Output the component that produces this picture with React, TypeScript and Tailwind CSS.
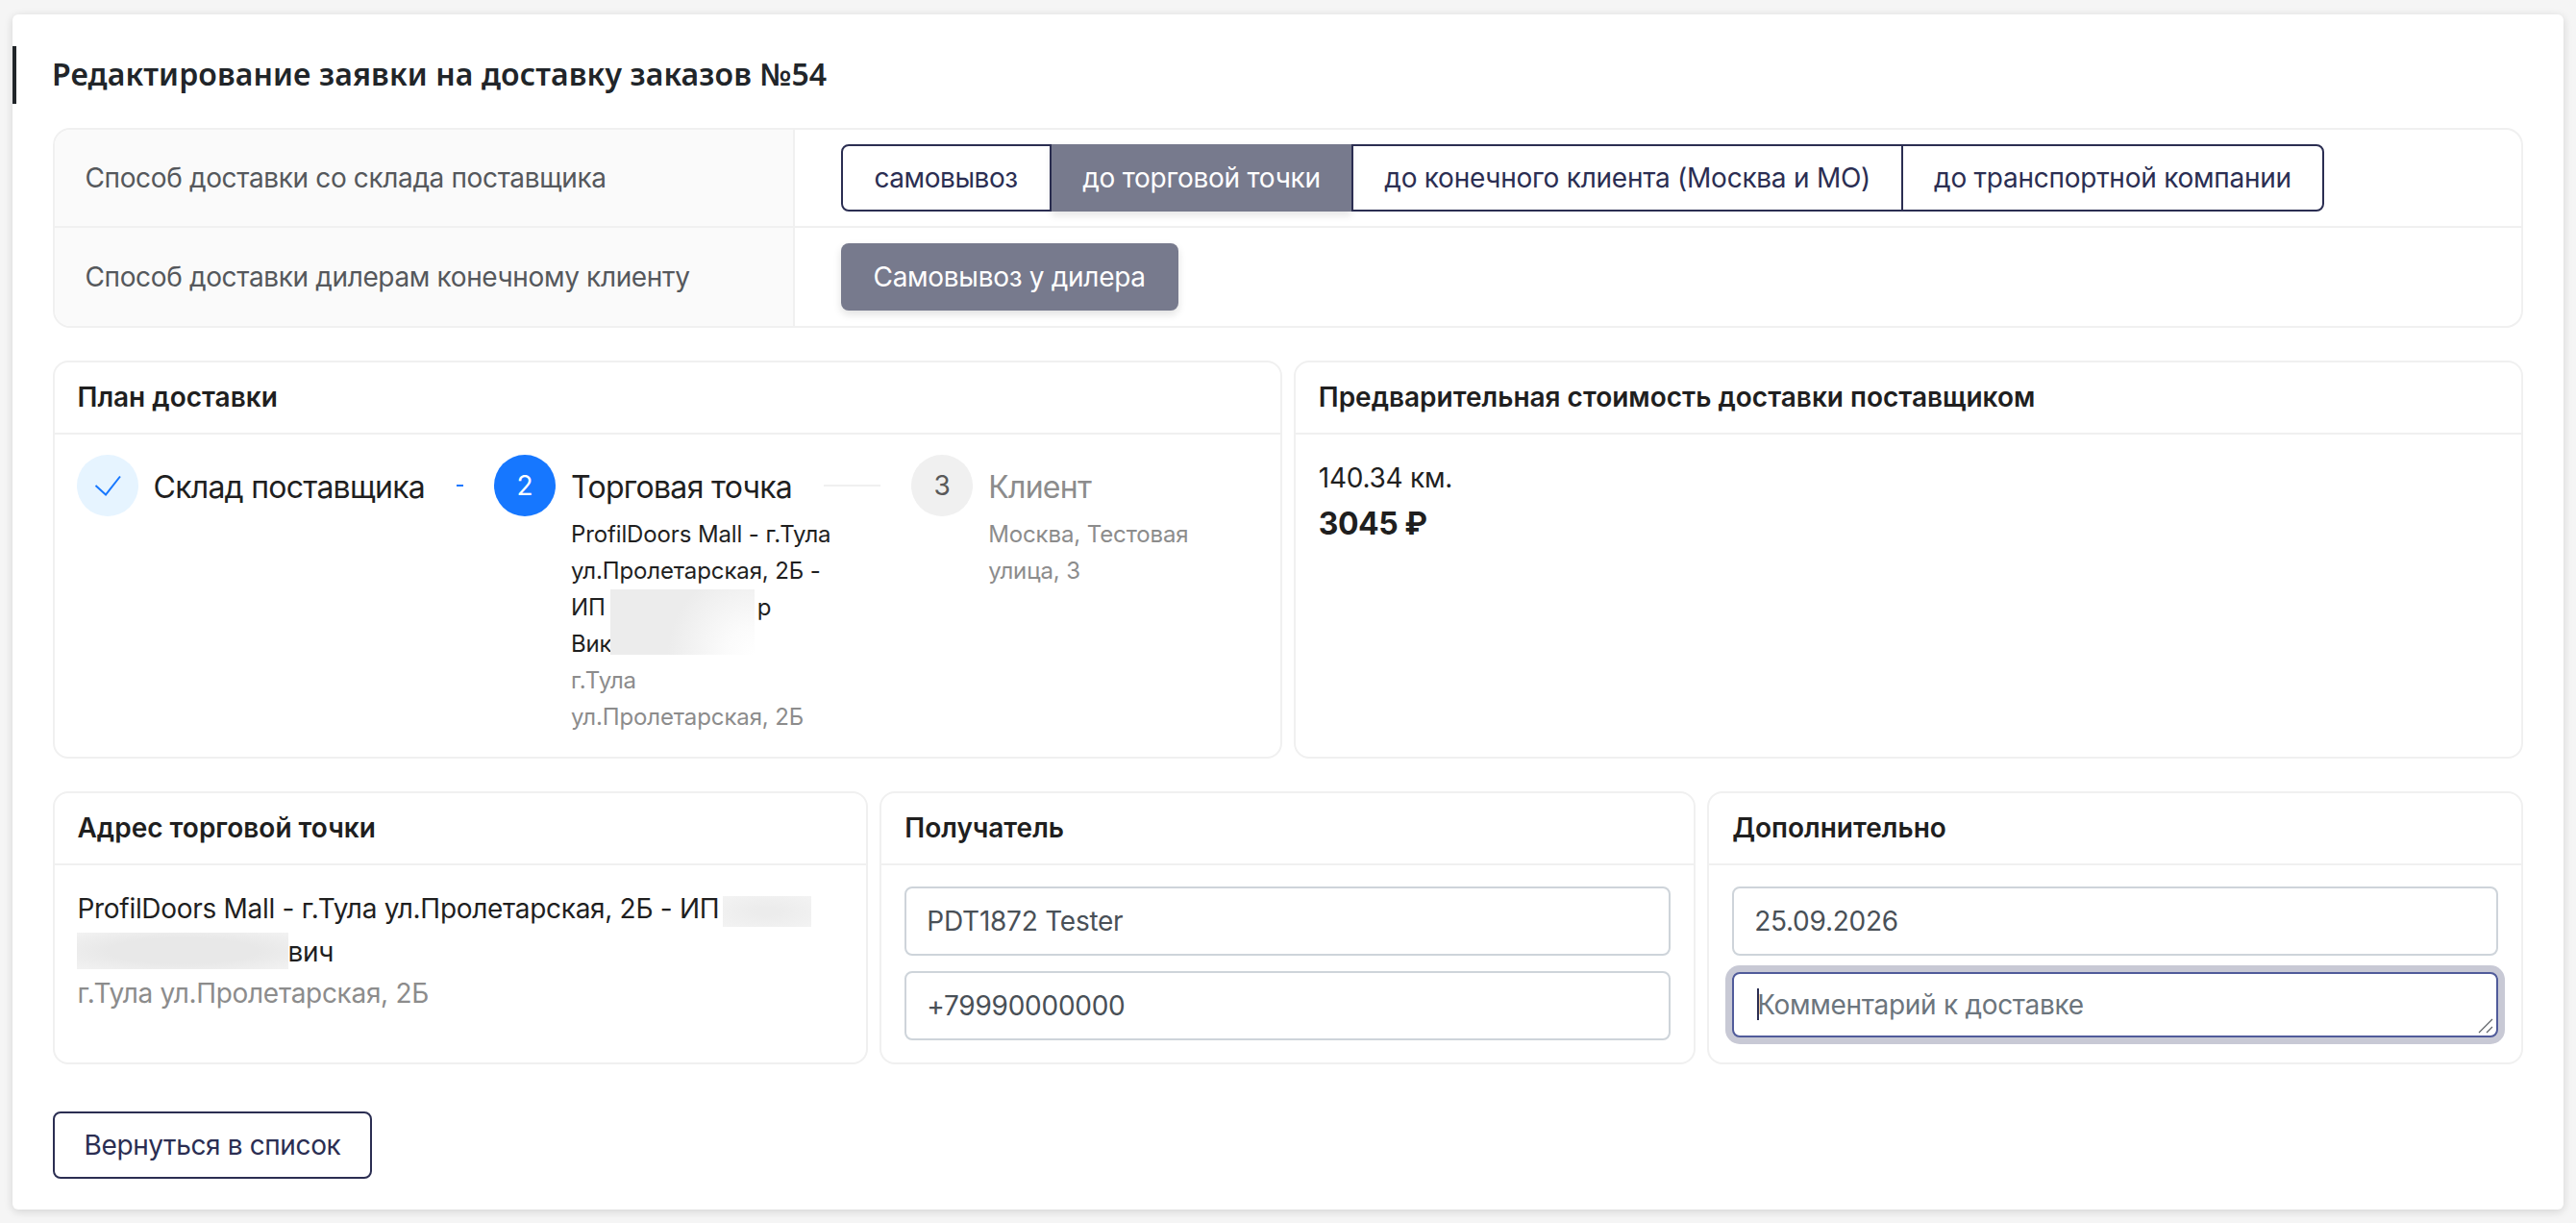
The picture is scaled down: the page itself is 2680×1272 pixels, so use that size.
import { ReactNode } from 'react';

function Panel({ title, children, bodyClass }: { title: string; children: ReactNode; bodyClass?: string }) {
    return (
        <div className="flex flex-col border-2 border-[#f0f0f0] rounded-[16px] bg-white min-w-0">
            <div className="h-[75px] shrink-0 flex items-center px-[24px] pb-[1px] border-b-2 border-[#f0f0f0] text-[28px] font-semibold text-[#1f1f1f]">
                {title}
            </div>
            <div className={bodyClass}>{children}</div>
        </div>
    );
}

function Blur({ className }: { className: string }) {
    return <div className={`absolute ${className}`} />;
}

function Connector({ className }: { className: string }) {
    return <div className={`h-[2px] ml-[33px] ${className}`} />;
}

function TextField({ value }: { value: string }) {
    return (
        <input
            readOnly
            value={value}
            className="w-full h-[72px] px-[21px] border-2 border-[#ced4da] rounded-[8px] bg-white text-[28px] tracking-[-0.25px] text-[#495057] outline-none"
        />
    );
}

export default function App() {
    return (
        <div className="min-h-[1272px] bg-[#f5f5f5] pt-[15px] px-[13px] font-['Inter',sans-serif]">
            <div className="h-[1243px] bg-white rounded-[6px] shadow-[0_2px_10px_rgba(0,0,0,0.14)] pt-[33px] pl-[41.5px] pr-[42px]">
                <div className="-ml-[41.5px] h-[60px] flex items-center pb-[2px] border-l-4 border-[#212529] pl-[37px] font-['Noto_Sans',sans-serif] text-[32px] tracking-[0.12px] font-semibold text-[#212529]">
                    Редактирование заявки на доставку заказов №54
                </div>

                <div className="mt-[25px] border-2 border-[#f0f0f0] rounded-[18px] overflow-hidden text-[28px]">
                    <div className="flex h-[102px] border-b-2 border-[#f0f0f0]">
                        <div className="w-[770px] shrink-0 flex items-center pl-[32px] bg-[#fafafa] border-r-2 border-[#f0f0f0] text-[#55585c] tracking-[-0.36px]">
                            Способ доставки со склада поставщика
                        </div>
                        <div className="flex items-center pl-[48px]">
                            <div className="flex h-[70px] text-[#2b2e52] tracking-[-0.25px]">
                                <div className="flex items-center px-[33px] border-2 border-[#2b2e52] rounded-l-[8px] tracking-[-0.45px]">самовывоз</div>
                                <div className="flex items-center px-[32.5px] bg-[#777a8d] text-white shadow-[0_4px_8px_rgba(0,0,0,0.1)]">до торговой точки</div>
                                <div className="flex items-center px-[32px] border-y-2 border-l-2 border-[#2b2e52]">до конечного клиента (Москва и МО)</div>
                                <div className="flex items-center px-[32px] border-2 border-[#2b2e52] rounded-r-[8px]">до транспортной компании</div>
                            </div>
                        </div>
                    </div>
                    <div className="flex h-[102px]">
                        <div className="w-[770px] shrink-0 flex items-center pl-[32px] bg-[#fafafa] border-r-2 border-[#f0f0f0] text-[#55585c] tracking-[-0.36px]">
                            Способ доставки дилерам конечному клиенту
                        </div>
                        <div className="flex items-center pl-[48px]">
                            <div className="flex items-center h-[70px] px-[34px] bg-[#777a8d] text-white tracking-[-0.3px] rounded-[8px] shadow-[0_4px_8px_rgba(0,0,0,0.12)]">
                                Самовывоз у дилера
                            </div>
                        </div>
                    </div>
                </div>

                <div className="mt-[34px] grid grid-cols-2 gap-[12px] h-[414px]">
                    <Panel title="План доставки" bodyClass="flex pt-[21px] pl-[23px]">
                        <div className="flex shrink-0">
                            <div className="w-[64px] h-[64px] rounded-full bg-[#e6f4ff] flex items-center justify-center">
                                <svg width="28" height="22" viewBox="0 0 28 22" fill="none">
                                    <path d="M1.5 11 L12 20.5 L27 1.5" stroke="#1677ff" strokeWidth="2" />
                                </svg>
                            </div>
                            <div className="ml-[16px] h-[64px] flex items-center">
                                <span className="pt-[4px] text-[32px] tracking-[-0.75px] text-[#1f1f1f]">Склад поставщика</span>
                                <Connector className="w-[7px] bg-[#1677ff]" />
                            </div>
                        </div>
                        <div className="flex shrink-0 ml-[32px]">
                            <div className="w-[64px] h-[64px] rounded-full bg-[#1677ff] flex items-center justify-center text-[28px] text-white">2</div>
                            <div className="ml-[16px]">
                                <div className="h-[64px] flex items-center">
                                    <span className="pt-[4px] text-[32px] tracking-[-0.7px] text-[#1f1f1f]">Торговая точка</span>
                                    <Connector className="w-[59px] bg-[#f0f0f0]" />
                                </div>
                                <div className="relative w-[280px] text-[24px] leading-[38px] tracking-[-0.12px]">
                                    <div className="text-[#1f1f1f]">ProfilDoors Mall - г.Тула</div>
                                    <div className="text-[#1f1f1f]">ул.Пролетарская, 2Б -</div>
                                    <div className="flex text-[#1f1f1f]">ИП<span className="ml-[158px]">р</span></div>
                                    <div className="text-[#1f1f1f]">Вик</div>
                                    <div className="text-[#8c8c8c]">г.Тула</div>
                                    <div className="text-[#8c8c8c]">ул.Пролетарская, 2Б</div>
                                    <Blur className="left-[41px] top-[76px] w-[150px] h-[68px] bg-[radial-gradient(circle_at_100%_100%,#ffffff_0%,#fbfbfb_18%,#ececec_55%)]" />
                                </div>
                            </div>
                        </div>
                        <div className="flex shrink-0 ml-[32px]">
                            <div className="w-[64px] h-[64px] rounded-full bg-[#f0f0f0] flex items-center justify-center text-[28px] text-[#595959]">3</div>
                            <div className="ml-[16px]">
                                <div className="h-[64px] flex items-center pt-[4px] text-[32px] tracking-[-0.7px] text-[#8c8c8c]">Клиент</div>
                                <div className="w-[220px] text-[24px] leading-[38px] tracking-[-0.12px] text-[#8c8c8c]">Москва, Тестовая улица, 3</div>
                            </div>
                        </div>
                    </Panel>
                    <Panel title="Предварительная стоимость доставки поставщиком" bodyClass="pt-[23px] px-[24px] text-[#1f1f1f]">
                        <div className="text-[28px] leading-[45px] tracking-[-0.25px]">140.34 км.</div>
                        <div className="mt-[2px] text-[32px] leading-[45px] tracking-[-0.5px] font-bold">3045 ₽</div>
                    </Panel>
                </div>

                <div className="mt-[34px] grid grid-cols-3 gap-[12px] h-[284px]">
                    <Panel title="Адрес торговой точки" bodyClass="pt-[23px] px-[24px] text-[28px] tracking-[-0.3px]">
                        <div className="relative text-[#1f1f1f] leading-[45px]">
                            <div>ProfilDoors Mall - г.Тула ул.Пролетарская, 2Б - ИП</div>
                            <div className="pl-[219px]">вич</div>
                            <Blur className="left-[671px] top-[9px] w-[92px] h-[32px] bg-[radial-gradient(ellipse_at_center,#ececec_20%,#f3f3f3_100%)]" />
                            <Blur className="-left-[1px] top-[47px] w-[220px] h-[38px] bg-[radial-gradient(ellipse_at_center,#e8e8e8_50%,#f2f2f2_100%)]" />
                        </div>
                        <div className="text-[#8c8c8c] leading-[41px]">г.Тула ул.Пролетарская, 2Б</div>
                    </Panel>
                    <Panel title="Получатель" bodyClass="pt-[22px] px-[24px] flex flex-col gap-[16px]">
                        <TextField value="PDT1872 Tester" />
                        <TextField value="+79990000000" />
                    </Panel>
                    <Panel title="Дополнительно" bodyClass="pt-[22px] px-[24px]">
                        <TextField value="25.09.2026" />
                        <div className="relative mt-[17px]">
                            <textarea
                                readOnly
                                placeholder="Комментарий к доставке"
                                className="block w-full h-[68px] px-[24px] pt-[12px] resize-none border-2 border-[#505b9a] rounded-[8px] bg-white text-[28px] leading-[40px] tracking-[-0.3px] text-[#495057] placeholder:text-[#6c757d] outline-none shadow-[0_0_0_7px_#c8c9d5]"
                            />
                            <div className="absolute left-[26px] top-[17px] w-[2px] h-[33px] bg-[#2b2e52]" />
                            <svg className="absolute right-[5px] bottom-[4px]" width="16" height="16" viewBox="0 0 16 16" fill="none">
                                <path d="M1 15 L15 1 M9 15 L15 9" stroke="#5f6368" strokeWidth="1.2" />
                            </svg>
                        </div>
                    </Panel>
                </div>

                <div className="mt-[49px] inline-flex items-center h-[70px] px-[31px] border-2 border-[#2b2e52] rounded-[8px] text-[28px] tracking-[-0.38px] text-[#2b2e52]">
                    Вернуться в список
                </div>
            </div>
        </div>
    );
}
